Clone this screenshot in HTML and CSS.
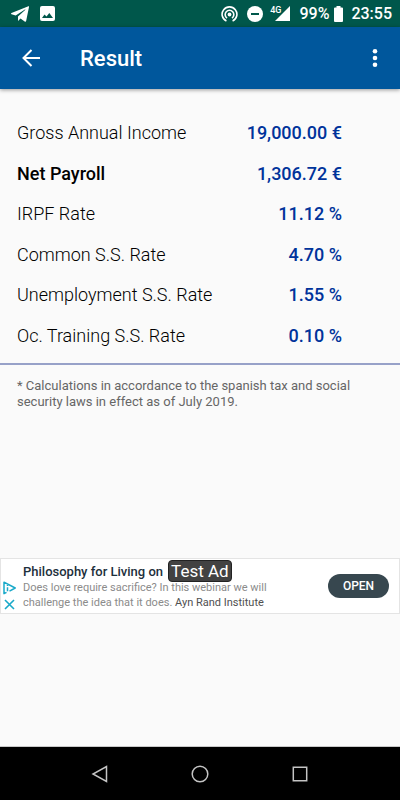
FILE: index.html
```html
<!DOCTYPE html>
<html lang="en">
<head>
<meta charset="utf-8">
<meta name="viewport" content="width=device-width, initial-scale=1">
<title>Result</title>
<link rel="stylesheet" href="styles.css">
</head>
<body>
<div class="status-bar">
  <svg class="icon-telegram" width="18" height="16" viewBox="0 0 18 16" aria-hidden="true"><path fill="#fff" fill-rule="evenodd" d="M17.400.300.500 7.100c-.6.3-.6.9 0 1.100l4.200 1.300L13.900 3.600c.5-.3.8-.1.5.2L7 10.600V15l2.500-2.500 4.200 3c.7.4 1.300.2 1.500-.7L18 1.100c.1-.7-.1-1-.6-.8Z"/></svg>
  <svg width="15" height="15" viewBox="0 0 15 15" aria-hidden="true"><path fill="#fff" fill-rule="evenodd" d="M2 0h11a2 2 0 0 1 2 2v11a2 2 0 0 1-2 2H2a2 2 0 0 1-2-2V2a2 2 0 0 1 2-2Zm0 12h11L9.300 7 6.500 10.600 4.500 8.400Z"/></svg>
  <div class="status-right">
    <svg width="17" height="16" viewBox="0 0 17 16" fill="none" stroke="#fff" stroke-width="1.600" aria-hidden="true"><circle cx="8.500" cy="8.500" r="1.900" fill="#fff" stroke="none"/><path d="M5.400 15A7.400 7.400 0 1 1 11.600 15M6 12.100A4.300 4.300 0 1 1 11 12.100"/></svg>
    <svg class="icon-dnd" width="16" height="16" viewBox="0 0 16 16" aria-hidden="true"><circle cx="8" cy="8" r="8" fill="#fff"/><path d="M4 8h8" stroke="#00574b" stroke-width="2"/></svg>
    <span class="signal"><span class="network">4G</span><svg width="15" height="15" viewBox="0 0 15 15" aria-hidden="true"><path fill="#fff" d="M15 0v15H0Z"/></svg></span>
    <span class="percent">99%</span>
    <svg class="icon-battery" width="9" height="16" viewBox="0 0 9 16" aria-hidden="true"><path fill="#fff" d="M2.500 0h4v1.500H8a1 1 0 0 1 1 1V15a1 1 0 0 1-1 1H1a1 1 0 0 1-1-1V2.500a1 1 0 0 1 1-1h1.500Z"/></svg>
    <span>23:55</span>
  </div>
</div>
<header class="app-bar">
  <button class="icon-button" aria-label="Back"><svg width="18" height="18" viewBox="0 0 18 18" fill="none" stroke="#fff" stroke-width="2" aria-hidden="true"><path d="M18 9H1.500M9.500 1 1.500 9l8 8"/></svg></button>
  <h1 class="title">Result</h1>
  <button class="icon-button" aria-label="More options"><svg width="6" height="18" viewBox="0 0 6 18" fill="#fff" aria-hidden="true"><circle cx="3" cy="2.300" r="2.300"/><circle cx="3" cy="9" r="2.300"/><circle cx="3" cy="15.700" r="2.300"/></svg></button>
</header>
<main class="content">
  <table class="results">
    <tr><th scope="row">Gross Annual Income</th><td>19,000.00 €</td></tr>
    <tr class="net"><th scope="row">Net Payroll</th><td>1,306.72 €</td></tr>
    <tr><th scope="row">IRPF Rate</th><td>11.12 %</td></tr>
    <tr><th scope="row">Common S.S. Rate</th><td>4.70 %</td></tr>
    <tr><th scope="row">Unemployment S.S. Rate</th><td>1.55 %</td></tr>
    <tr><th scope="row">Oc. Training S.S. Rate</th><td>0.10 %</td></tr>
  </table>
  <p class="note">* Calculations in accordance to the spanish tax and social security laws in effect as of July 2019.</p>
</main>
<aside class="ad">
  <div class="ad-marks">
    <svg width="13" height="14" viewBox="0 0 13 14" fill="none" stroke="#19a9c9" stroke-width="1.500" stroke-linejoin="round" aria-hidden="true"><path d="M3.500 11.300 1 12.700V1.200L12.200 7 6.500 10.100M4.500 4v1M4.500 6.300v4"/></svg>
    <svg width="11" height="11" viewBox="0 0 11 11" stroke="#19a9c9" stroke-width="1.600" aria-hidden="true"><path d="m1 1 9 9M10 1l-9 9"/></svg>
  </div>
  <div class="ad-copy">
    <div class="ad-title">Philosophy for Living on <span class="ad-badge">Test Ad</span></div>
    <div class="ad-text">Does love require sacrifice? In this webinar we will challenge the idea that it does. <span class="advertiser">Ayn Rand Institute</span></div>
  </div>
  <button class="open">OPEN</button>
</aside>
<nav class="nav-bar">
  <button aria-label="Back"><svg width="18" height="18" viewBox="0 0 18 18"><path d="M15.500 1.500v15L2 9Z"/></svg></button>
  <button aria-label="Home"><svg width="18" height="18" viewBox="0 0 18 18"><circle cx="9" cy="9" r="7.800"/></svg></button>
  <button aria-label="Recent apps"><svg width="18" height="18" viewBox="0 0 18 18"><path d="M2.300 2.300h13.400v13.400H2.300Z"/></svg></button>
</nav>
</body>
</html>
```
FILE: styles.css
```css
* {
  box-sizing: border-box;
}

body {
  margin: 0;
  min-height: 100vh;
  display: flex;
  flex-direction: column;
  background: #fafafa;
  color: #000;
  font-family: Roboto, "Liberation Sans", sans-serif;
}

button {
  display: flex;
  align-items: center;
  justify-content: center;
  padding: 0;
  border: 0;
  background: none;
  font: inherit;
}

svg {
  display: block;
  flex: none;
}

.status-bar {
  display: flex;
  align-items: center;
  gap: 11px;
  height: 27px;
  padding: 0 8px 0 11px;
  background: #00574b;
  color: #fff;
  font-size: 16px;
  font-weight: 500;
}

.status-right {
  display: flex;
  align-items: center;
  gap: 9px;
  margin-left: auto;
}

.signal {
  display: flex;
  align-items: flex-start;
  margin-left: -2px;
}

.network {
  margin-right: -6px;
  font-size: 9px;
  line-height: 8px;
}

.icon-battery {
  margin: 0 -1px 0 -4px;
}

.app-bar {
  display: flex;
  align-items: center;
  height: 62px;
  padding: 0 22px;
  background: #00579c;
  color: #fff;
  box-shadow: 0 1px 4px rgba(0, 0, 0, 0.4);
}

.title {
  flex: 1;
  margin: 0 0 0 40px;
  padding-top: 2px;
  font-size: 22px;
  font-weight: 500;
  line-height: 26px;
}

.content {
  flex: 1;
}

.results {
  width: 100%;
  height: 276px;
  padding: 24px 0 7px;
  border-bottom: 2px solid #97a1c8;
  border-spacing: 0;
  font-size: 18px;
  line-height: 22px;
}

.results th {
  padding: 0 0 0 17px;
  font-weight: 300;
  text-align: left;
}

.results .net th {
  font-weight: 500;
}

.results td {
  padding: 0 58px 0 0;
  color: #00339b;
  font-weight: 500;
  text-align: right;
}

.note {
  margin: 13px 32px 0 17px;
  color: #666;
  font-size: 13px;
  line-height: 16px;
}

.ad {
  display: flex;
  align-items: center;
  height: 56px;
  margin-bottom: 132px;
  padding: 0 10px 0 2px;
  border: 1px solid #e4e4e4;
  background: #fff;
}

.ad-marks {
  display: grid;
  gap: 4px;
  justify-items: center;
  align-self: flex-end;
  width: 13px;
  margin-bottom: 3px;
}

.ad-copy {
  flex: 1;
  margin-left: 7px;
}

.ad-title {
  position: relative;
  color: #1d303c;
  font-size: 13px;
  font-weight: 500;
  line-height: 17px;
}

.ad-badge {
  position: absolute;
  top: -3px;
  margin-left: 5px;
  padding: 0 2px;
  border: 1px solid #222;
  border-radius: 4px;
  background: #424242;
  color: #fff;
  font-size: 17px;
  font-weight: 400;
  line-height: 20px;
}

.ad-text {
  max-width: 256px;
  color: #8b8b8b;
  font-size: 11px;
  line-height: 15px;
}

.advertiser {
  color: #505050;
}

.open {
  width: 61px;
  height: 24px;
  border-radius: 12px;
  background: #37474f;
  color: #fff;
  font-size: 12px;
  font-weight: 500;
}

.nav-bar {
  display: flex;
  align-items: center;
  justify-content: center;
  gap: 82px;
  height: 54px;
  border-top: 1px solid #c8c8c8;
  background: #000;
}

.nav-bar svg {
  fill: none;
  stroke: #c4c4c4;
  stroke-width: 1.5;
}
```
